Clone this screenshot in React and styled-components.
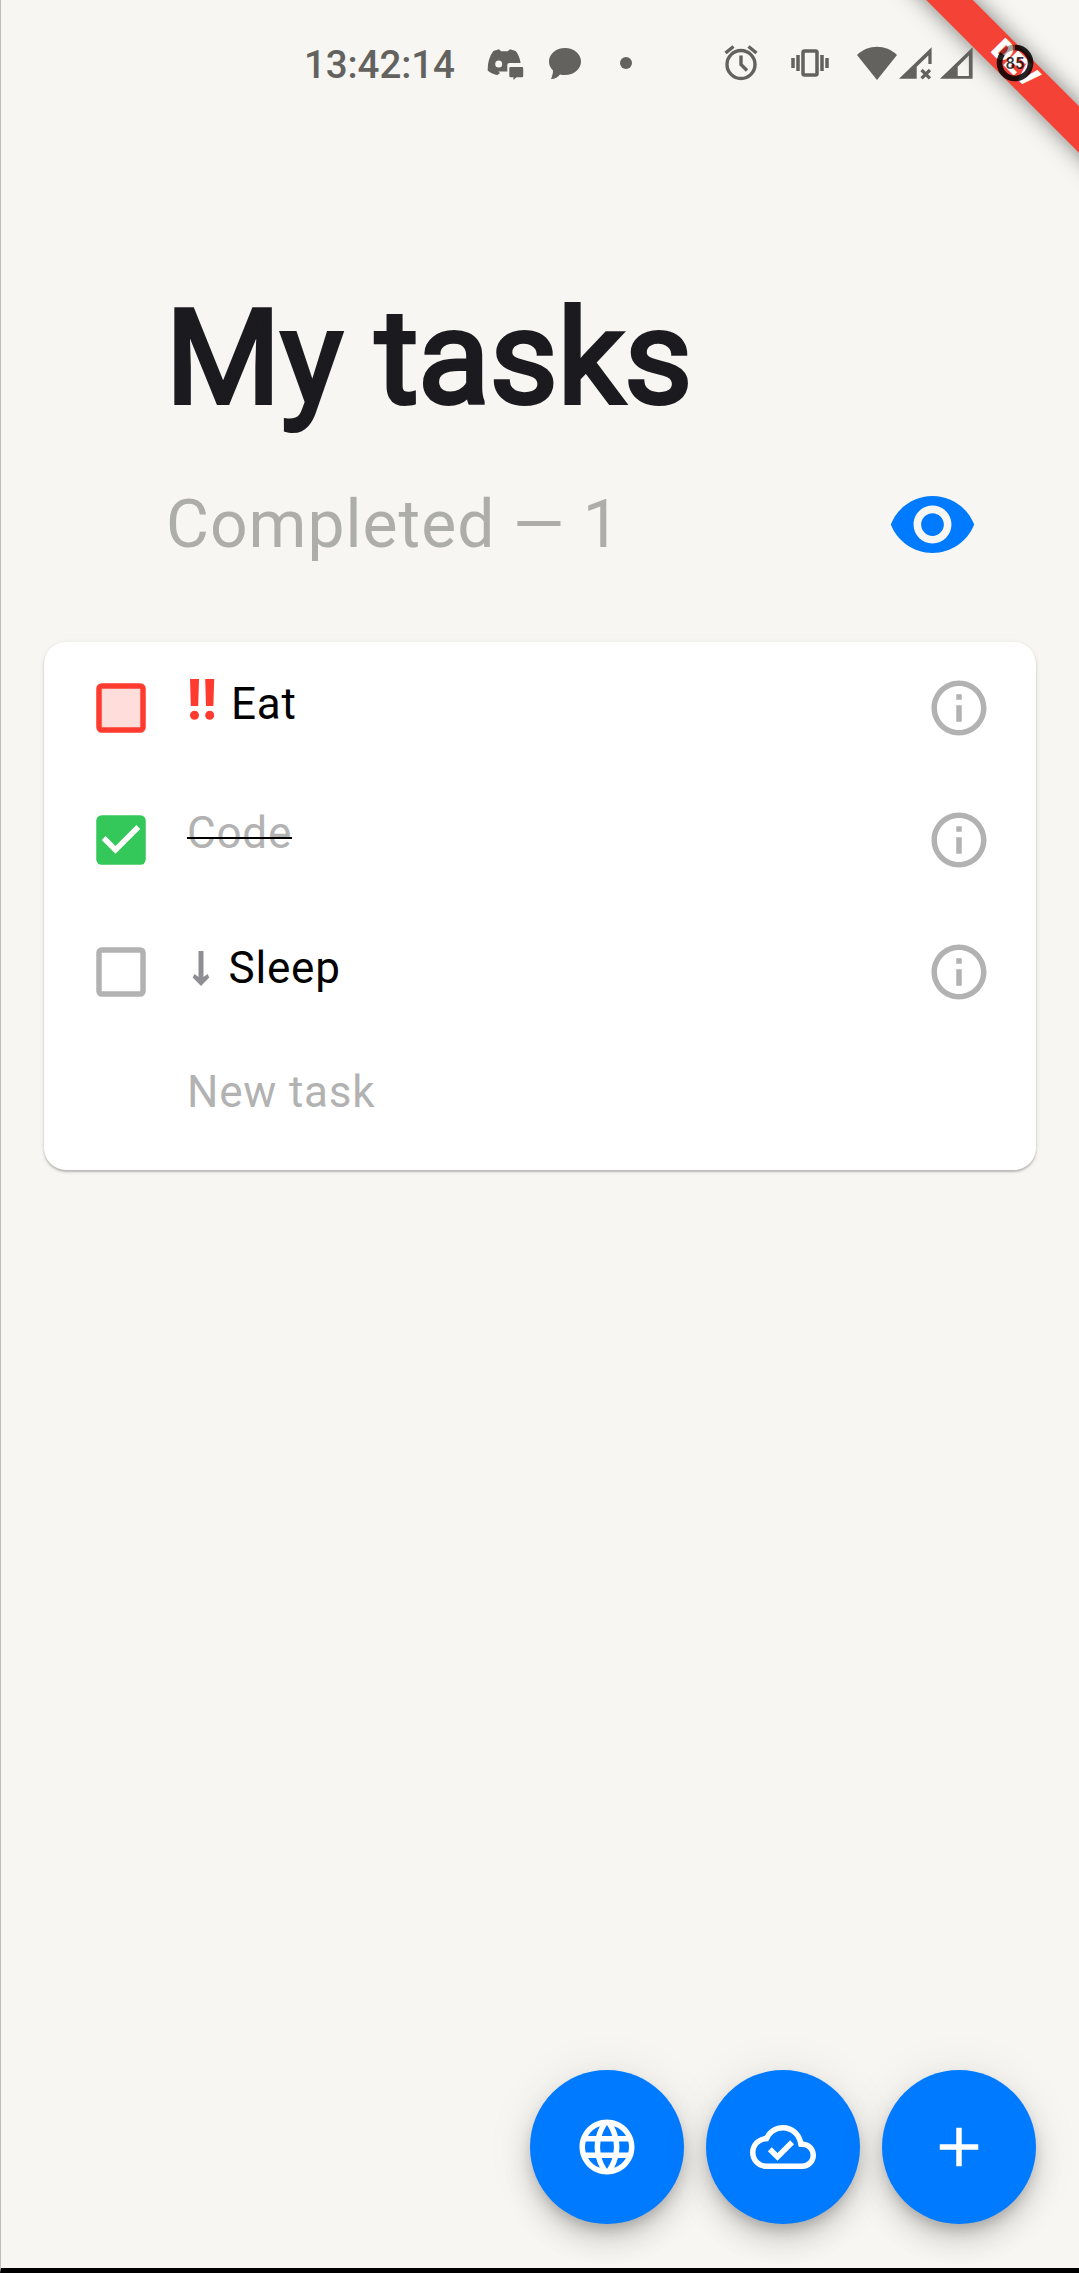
import React from "react";
import styled, { createGlobalStyle } from "styled-components";

const Global = createGlobalStyle`
  * { box-sizing: border-box; }
  html, body { margin: 0; padding: 0; background: #f7f6f2; }
`;

const Screen = styled.main`
  position: relative;
  width: 1079px;
  height: 2273px;
  display: flex;
  flex-direction: column;
  overflow: hidden;
  background: #f7f6f2;
  border-left: 1px solid #bdbdbb;
  border-bottom: 5px solid #000;
  font-family: Roboto, sans-serif;
  font-weight: 400;
  color: #000;
`;

const StatusBar = styled.header`
  position: relative;
  z-index: 2;
  height: 126px;
  padding: 0 40px 1px 303px;
  display: flex;
  align-items: center;
  color: #63625f;
`;

const Clock = styled.time`
  width: 181px;
  padding-top: 4px;
  font-size: 38.5px;
  font-weight: 500;
  line-height: 44px;
  letter-spacing: -0.1px;
  white-space: nowrap;
`;

const StatusIcon = styled.svg`
  flex: none;
  display: block;
  width: ${(p) => p.$w}px;
  height: 44px;
  margin-right: ${(p) => p.$gap || 0}px;
  color: ${(p) => p.$color || "inherit"};
  fill: ${(p) => (p.$line ? "none" : "currentColor")};
  stroke: ${(p) => (p.$line ? "currentColor" : "none")};
`;

const Ribbon = styled.div`
  position: absolute;
  z-index: 1;
  left: 713px;
  top: 48px;
  width: 600px;
  height: 33px;
  padding-bottom: 3px;
  transform: rotate(45deg);
  background: #f44336;
  box-shadow: 0 0 22px rgba(0, 0, 0, 0.5);
  display: flex;
  align-items: center;
  justify-content: center;
  color: #fff;
  font-size: 28px;
  font-weight: 900;
  line-height: 30px;
  -webkit-text-stroke: 0.8px #fff;
`;

const Heading = styled.section`
  height: 516px;
  padding: 140px 60px 0 165px;
  display: flex;
  flex-direction: column;
`;

const Title = styled.h1`
  margin: 0 0 0 -0.5px;
  font-size: 132px;
  font-weight: 400;
  line-height: 184px;
  letter-spacing: -0.25px;
  white-space: nowrap;
  color: #1b1b1f;
  -webkit-text-stroke: 4.125px #1b1b1f;
`;

const Summary = styled.div`
  margin-top: 24.5px;
  display: flex;
  align-items: center;
  justify-content: space-between;
  height: 100px;
  padding-right: 41.5px;
`;

const Completed = styled.p`
  margin: 0;
  padding-top: 1px;
  font-size: 66px;
  line-height: 100px;
  letter-spacing: 1px;
  color: #adada9;
  white-space: nowrap;
`;

const Eye = styled.svg`
  width: 91px;
  height: 91px;
  fill: #007aff;
`;

const Card = styled.section`
  width: 992px;
  height: 528px;
  margin-left: 43px;
  padding-left: 44px;
  border-radius: 22px;
  background: #fff;
  box-shadow: 0 2px 2px rgba(0, 0, 0, 0.2), 0 1px 5px rgba(0, 0, 0, 0.1);
`;

const Row = styled.div`
  height: 132px;
  padding-right: 44px;
  display: flex;
  align-items: center;
`;

const Box = styled.svg`
  width: 66px;
  height: 66px;
  color: ${(p) => p.$color};
`;

const Label = styled.div`
  flex: 1;
  margin: ${(p) => p.$lift}px 0 0 33px;
  display: flex;
  align-items: center;
  font-size: 44px;
  line-height: 56px;
  letter-spacing: 0.8px;
  white-space: nowrap;
  color: ${(p) => (p.$muted ? "#b2b2b2" : "#000")};
`;

const Struck = styled.span`
  position: relative;

  &::after {
    content: "";
    position: absolute;
    left: 0;
    right: 0;
    top: 32px;
    height: 2.5px;
    background: #000;
  }
`;

const Priority = styled.svg`
  width: ${(p) => p.$w}px;
  height: 56px;
  margin-right: ${(p) => p.$gap}px;
`;

const Info = styled.svg`
  width: 66px;
  height: 66px;
  fill: #b2b2b2;
`;

const Actions = styled.nav`
  margin: auto 43px 44px auto;
  display: flex;
  gap: 22px;
`;

const Fab = styled.button`
  width: 154px;
  height: 154px;
  padding: 0;
  border: 0;
  border-radius: 50%;
  display: grid;
  place-items: center;
  background: #007aff;
  box-shadow: 0 8px 14px -3px rgba(0, 0, 0, 0.2), 0 16px 28px rgba(0, 0, 0, 0.14),
    0 3px 50px rgba(0, 0, 0, 0.08);
`;

const FabIcon = styled.svg`
  width: 66px;
  height: 66px;
  fill: #fff;
`;

const INFO =
  "M11 7h2v2h-2zm0 4h2v6h-2zm1-9C6.48 2 2 6.48 2 12s4.48 10 10 10 10-4.48 10-10S17.52 2 12 2zm0 18c-4.41 0-8-3.59-8-8s3.59-8 8-8 8 3.59 8 8-3.59 8-8 8z";
const EYE =
  "M12 4.5C7 4.5 2.73 7.61 1 12c1.73 4.39 6 7.5 11 7.5s9.27-3.11 11-7.5c-1.73-4.39-6-7.5-11-7.5zM12 17c-2.76 0-5-2.24-5-5s2.24-5 5-5 5 2.24 5 5-2.24 5-5 5zm0-8c-1.66 0-3 1.34-3 3s1.34 3 3 3 3-1.34 3-3-1.34-3-3-3z";
const GLOBE =
  "M11.99 2C6.47 2 2 6.48 2 12s4.47 10 9.99 10C17.52 22 22 17.52 22 12S17.52 2 11.99 2zm6.93 6h-2.95c-.32-1.25-.78-2.45-1.38-3.56 1.84.63 3.37 1.91 4.33 3.56zM12 4.04c.83 1.2 1.48 2.53 1.91 3.96h-3.82c.43-1.43 1.08-2.76 1.91-3.96zM4.26 14C4.1 13.36 4 12.69 4 12s.1-1.36.26-2h3.38c-.08.66-.14 1.32-.14 2s.06 1.34.14 2H4.26zm.82 2h2.95c.32 1.25.78 2.45 1.38 3.56-1.84-.63-3.37-1.9-4.33-3.56zm2.95-8H5.08c.96-1.66 2.49-2.93 4.33-3.56C8.81 5.55 8.35 6.75 8.03 8zM12 19.96c-.83-1.2-1.48-2.53-1.91-3.96h3.82c-.43 1.43-1.08 2.76-1.91 3.96zM14.34 14H9.66c-.09-.66-.16-1.32-.16-2s.07-1.35.16-2h4.68c.09.65.16 1.32.16 2s-.07 1.34-.16 2zm.25 5.56c.6-1.11 1.06-2.31 1.38-3.56h2.95c-.96 1.65-2.49 2.93-4.33 3.56zM16.36 14c.08-.66.14-1.32.14-2s-.06-1.34-.14-2h3.38c.16.64.26 1.31.26 2s-.1 1.36-.26 2h-3.38z";
const CLOUD =
  "M19.35 10.04C18.67 6.59 15.64 4 12 4 9.11 4 6.6 5.64 5.35 8.04 2.34 8.36 0 10.91 0 14c0 3.31 2.69 6 6 6h13c2.76 0 5-2.24 5-5 0-2.64-2.05-4.78-4.65-4.96zM19 18H6c-2.21 0-4-1.79-4-4 0-2.05 1.53-3.76 3.56-3.97l1.07-.11.5-.95C8.08 7.14 9.94 6 12 6c2.62 0 4.88 1.86 5.39 4.43l.3 1.5 1.53.11c1.56.1 2.78 1.41 2.78 2.96 0 1.65-1.35 3-3 3zm-9-3.82l-2.09-2.09L6.5 13.5 10 17l6.01-6.01-1.41-1.41z";
const PLUS = "M19 13h-6v6h-2v-6H5v-2h6V5h2v6h6v2z";

function CheckBox({ kind }) {
  const color = { urgent: "#ff3b30", done: "#34c759", plain: "#b2b2b2" }[kind];
  return (
    <Box viewBox="0 0 24 24" $color={color}>
      {kind === "done" ? (
        <>
          <rect x="3" y="3" width="18" height="18" rx="2" fill="currentColor" />
          <path d="M5 12l5 5L19 8l-1.41-1.42L10 14.17l-3.59-3.58z" fill="#fff" />
        </>
      ) : (
        <rect
          x="4" y="4" width="16" height="16" rx="1"
          fill={kind === "urgent" ? "#ffdddb" : "none"}
          stroke="currentColor" strokeWidth="2"
        />
      )}
    </Box>
  );
}

function InfoIcon() {
  return (
    <Info viewBox="0 0 24 24">
      <path d={INFO} />
    </Info>
  );
}

export default function App() {
  return (
    <>
      <Global />
      <Screen>
        <Ribbon>DEV</Ribbon>
        <StatusBar>
          <Clock>13:42:14</Clock>
          <StatusIcon viewBox="0 0 44 44" $w={44} $gap={14}>
            <path
              fillRule="evenodd"
              d="M8.3 10L14 8.300L16 10.300H22.700L25 8.300L30.700 10C33.500 13.500 35 17.500 35.600 22H24.500Q22.300 22 22.300 24V30.500H13.300L15 32L12.500 34C9 33.500 5.500 32 2.700 29.500C2.500 22 4.500 15 8.300 10zM13.700 19.500a3.500 3.500 0 1 0 0 7a3.500 3.500 0 1 0 0-7z"
            />
            <path d="M25.500 26h11.500q1.200 0 1.200 1.200v7.800q0 1.200-1.200 1.200h-5.500L28.500 39v-2.800h-3q-1.200 0-1.200-1.200v-7.800q0-1.200 1.200-1.200z" />
          </StatusIcon>
          <StatusIcon viewBox="0 0 44 44" $w={44} $gap={17}>
            <path d="M22 7C13 7 6 13 6 20.500c0 4 1.500 6.500 4 9 0 3-1 6-2 8.500 4 0 7-2 9-4.500 1.500.500 3.500.500 5 .500 9 0 16-6 16-13.500S31 7 22 7z" />
          </StatusIcon>
          <StatusIcon viewBox="0 0 44 44" $w={44} $gap={71}>
            <circle cx="22" cy="22" r="6" />
          </StatusIcon>
          <StatusIcon viewBox="0 0 44 44" $w={44} $gap={25} $line strokeWidth="3.4">
            <circle cx="22" cy="23.500" r="14" />
            <path d="M22 14.500v9l6 6M6.500 12l8-6.500M37.500 12l-8-6.500" />
          </StatusIcon>
          <StatusIcon viewBox="0 0 44 44" $w={44} $gap={23} $line strokeWidth="3.500">
            <rect x="15" y="10" width="14" height="24" rx="1.500" />
            <path d="M10 14v16M5 17v10M34 14v16M39 17v10" />
          </StatusIcon>
          <StatusIcon viewBox="0 0 44 44" $w={44}>
            <path d="M2 14c11-11 29-11 40 0L22 39z" />
          </StatusIcon>
          <StatusIcon viewBox="0 0 44 44" $w={41}>
            <path d="M0 39L35 5v18h-3.500V14L19 26v13z" />
            <path d="M24.200 29.500l9 9M33.200 29.500l-9 9" stroke="currentColor" strokeWidth="3.500" />
          </StatusIcon>
          <StatusIcon viewBox="0 0 44 44" $w={41} $gap={12}>
            <path fillRule="evenodd" d="M0 39L35 5v34zM19 36h12V14L19 26z" />
          </StatusIcon>
          <StatusIcon viewBox="0 0 44 44" $w={44} $color="rgba(0, 0, 0, 0.78)">
            <circle cx="22" cy="22" r="15.500" fill="none" stroke="#000" strokeOpacity=".35" strokeWidth="5.500" />
            <path d="M22 6.500A15.500 15.500 0 1 1 9.500 12.900" fill="none" stroke="currentColor" strokeWidth="5.500" />
            <text x="22" y="28" textAnchor="middle" fontSize="16.500" fontWeight="500">85</text>
          </StatusIcon>
        </StatusBar>
        <Heading>
          <Title>My tasks</Title>
          <Summary>
            <Completed>Completed — 1</Completed>
            <Eye viewBox="0 0 24 24">
              <path d={EYE} />
            </Eye>
          </Summary>
        </Heading>
        <Card>
          <Row>
            <CheckBox kind="urgent" />
            <Label $lift={-8}>
              <Priority viewBox="0 0 28 56" $w={28} $gap={16} fill="#ff3b30">
                <path d="M3 3h9l-.8 27H3.800zM18.200 3h9l-.8 27H19z" />
                <circle cx="7.500" cy="39.200" r="4.500" />
                <circle cx="22.700" cy="39.200" r="4.500" />
              </Priority>
              Eat
            </Label>
            <InfoIcon />
          </Row>
          <Row>
            <CheckBox kind="done" />
            <Label $lift={-15} $muted>
              <Struck>Code</Struck>
            </Label>
            <InfoIcon />
          </Row>
          <Row>
            <CheckBox kind="plain" />
            <Label $lift={-8}>
              <Priority viewBox="0 0 28 56" $w={28} $gap={13.5} fill="#8e8e93">
                <path d="M11.500 11h5v26l4-3 1.800 3.500-8.300 8.500-8.300-8.500 1.800-3.500 4 3z" />
              </Priority>
              Sleep
            </Label>
            <InfoIcon />
          </Row>
          <Row>
            <Box viewBox="0 0 24 24" />
            <Label $lift={-24} $muted>New task</Label>
          </Row>
        </Card>
        <Actions>
          {[["Language", GLOBE], ["Synced", CLOUD], ["Add", PLUS]].map(([name, d]) => (
            <Fab key={name}>
              <FabIcon viewBox="0 0 24 24">
                <path d={d} />
              </FabIcon>
            </Fab>
          ))}
        </Actions>
      </Screen>
    </>
  );
}
